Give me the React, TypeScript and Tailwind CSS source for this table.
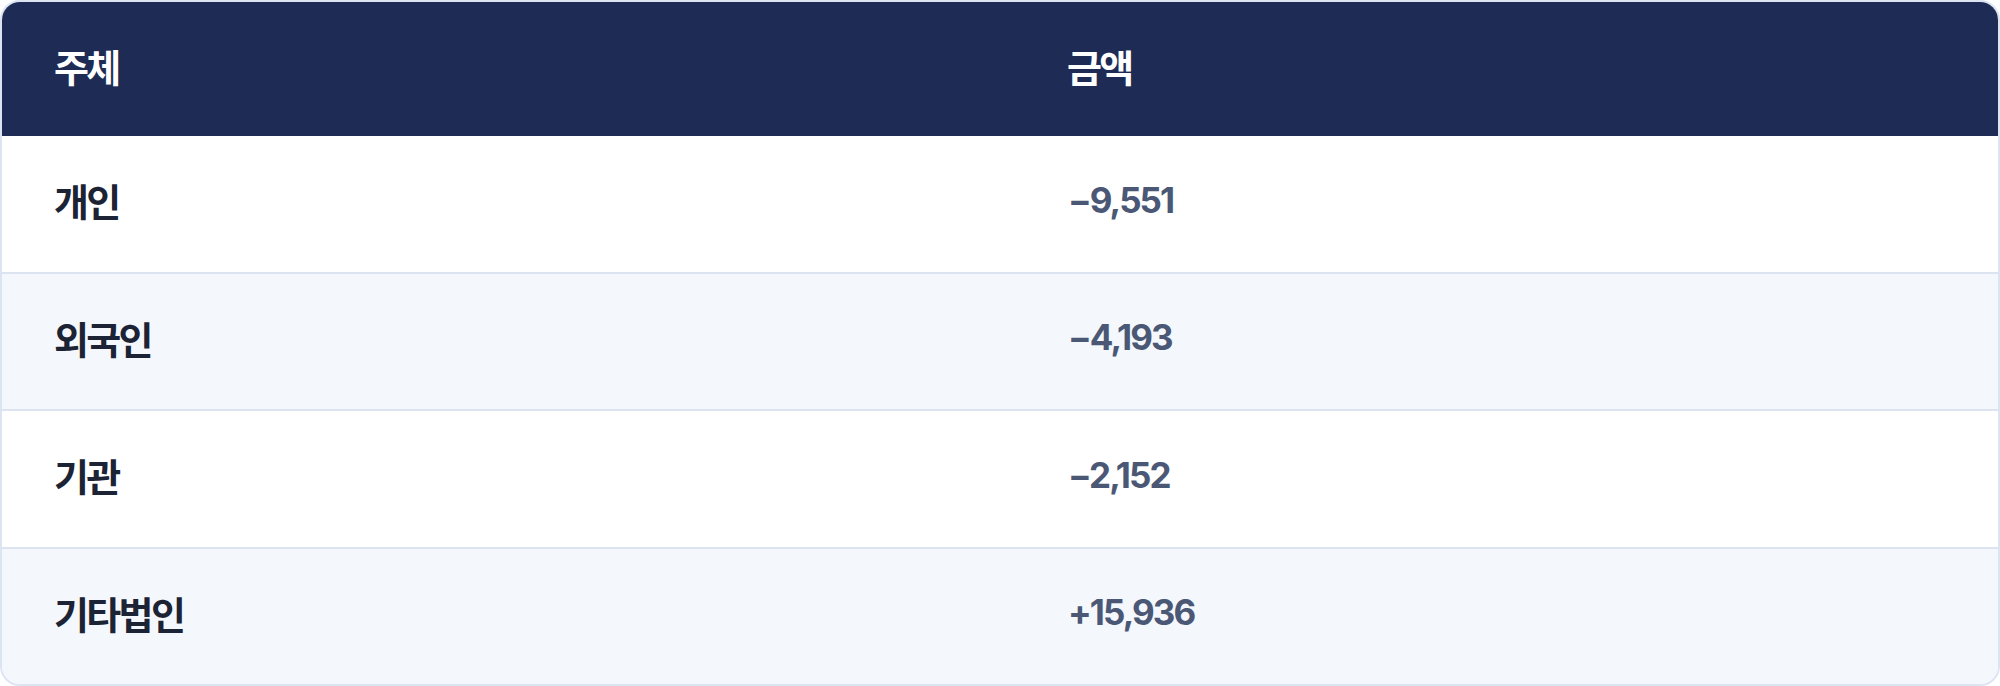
import React from "react";

const rows = [
  { name: "개인", value: "−9,551" },
  { name: "외국인", value: "−4,193" },
  { name: "기관", value: "−2,152" },
  { name: "기타법인", value: "+15,936" },
];

const ko = { fontFamily: '"Noto Sans CJK KR", "Noto Sans", sans-serif' };
const num = { fontFamily: 'Inter, "Noto Sans CJK KR", sans-serif' };

export default function App() {
  return (
    <div className="w-[2000px] h-[686px] bg-white">
      <div className="h-full flex flex-col border-2 border-[#dde4f1] rounded-[20px] overflow-hidden">
        <div className="h-[134px] shrink-0 grid grid-cols-[1012px_1fr] items-center bg-[#1e2c55] text-white pb-[7px]">
          <div className="pl-[52px] text-[38px] leading-none font-bold tracking-[-0.07em]" style={ko}>주체</div>
          <div className="pl-[53px] text-[38px] leading-none font-bold tracking-[-0.07em]" style={ko}>금액</div>
        </div>
        {rows.map((r, i) => (
          <div
            key={r.name}
            className={
              "flex-1 grid grid-cols-[1012px_1fr] items-center pb-[7px] " +
              (i > 0 ? "border-t-2 border-[#dde4f1] " : "") +
              (i % 2 === 1 ? "bg-[#f4f7fc]" : "bg-white")
            }
          >
            <div className="pl-[52px] text-[38px] leading-none font-bold text-[#1b2334] tracking-[-0.07em]" style={ko}>
              {r.name}
            </div>
            <div className="pl-[54px] text-[35px] leading-none font-bold text-[#4a5876] tracking-[-0.055em]" style={num}>
              {r.value}
            </div>
          </div>
        ))}
      </div>
    </div>
  );
}
